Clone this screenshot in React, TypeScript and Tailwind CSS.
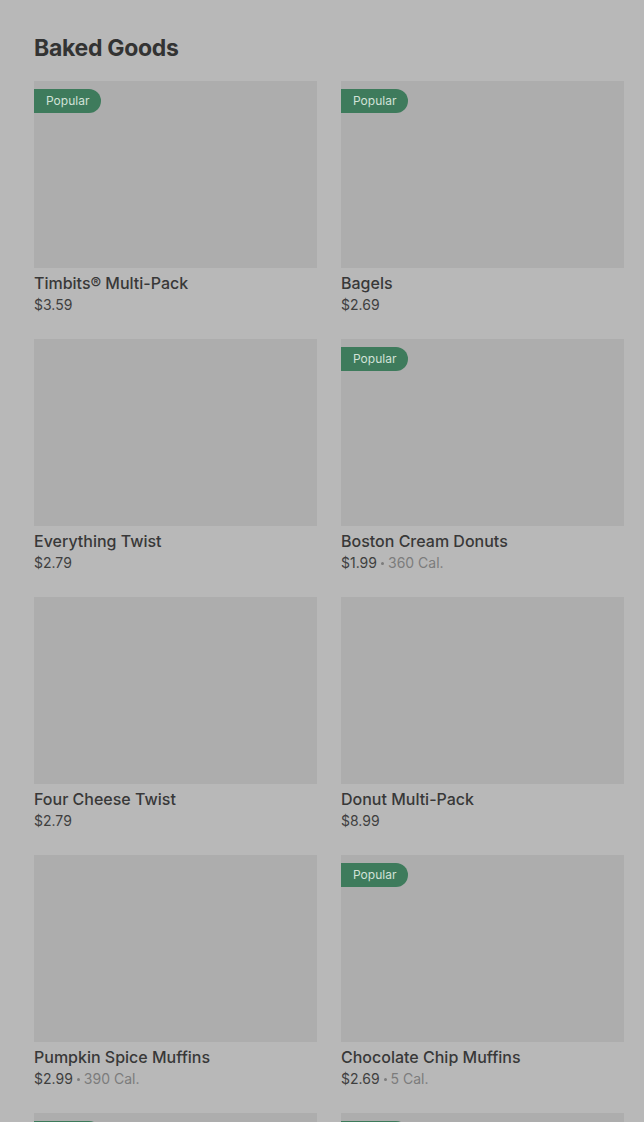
import React from "react";

type Item = {
  name: string;
  price: string;
  cal?: string;
  popular?: boolean;
};

const items: Item[] = [
  { name: "Timbits® Multi-Pack", price: "$3.59", popular: true },
  { name: "Bagels", price: "$2.69", popular: true },
  { name: "Everything Twist", price: "$2.79" },
  { name: "Boston Cream Donuts", price: "$1.99", cal: "360 Cal.", popular: true },
  { name: "Four Cheese Twist", price: "$2.79" },
  { name: "Donut Multi-Pack", price: "$8.99" },
  { name: "Pumpkin Spice Muffins", price: "$2.99", cal: "390 Cal." },
  { name: "Chocolate Chip Muffins", price: "$2.69", cal: "5 Cal.", popular: true },
  { name: "Croissants", price: "$2.49", popular: true },
  { name: "Cookies", price: "$1.49", popular: true },
];

function Card({ item }: { item: Item }) {
  return (
    <div className="flex flex-col">
      <div className="relative h-[187px] w-full bg-[#adadad]">
        {item.popular && (
          <span className="absolute left-0 top-2 flex h-6 items-center rounded-r-full bg-[#3e7b5c] px-3 text-[12px] text-[#d2e2d8]">
            Popular
          </span>
        )}
      </div>
      <p className="mt-[4px] h-[22px] text-[16px] leading-[22px] font-medium text-[#383838]">
        {item.name}
      </p>
      <div className="mt-[1px] flex h-[20px] items-center gap-[4px] text-[14px] leading-[20px] text-[#3f3f3f]">
        <span>{item.price}</span>
        {item.cal && (
          <>
            <span className="h-[3px] w-[3px] rounded-full bg-[#7c7c7c]" />
            <span className="text-[#7c7c7c]">{item.cal}</span>
          </>
        )}
      </div>
    </div>
  );
}

export default function App() {
  return (
    <div
      className="h-[1122px] w-full overflow-hidden bg-[#b8b8b8] pl-[34px] pt-[33px]"
      style={{ fontFamily: "Inter, 'Noto Sans', sans-serif" }}
    >
      <h2 className="text-[23px] leading-[30px] font-bold tracking-[-0.3px] text-[#333333]">
        Baked Goods
      </h2>
      <div className="mt-[18px] grid w-[590px] grid-cols-2 gap-x-6 gap-y-6">
        {items.map((item) => (
          <Card key={item.name} item={item} />
        ))}
      </div>
    </div>
  );
}
